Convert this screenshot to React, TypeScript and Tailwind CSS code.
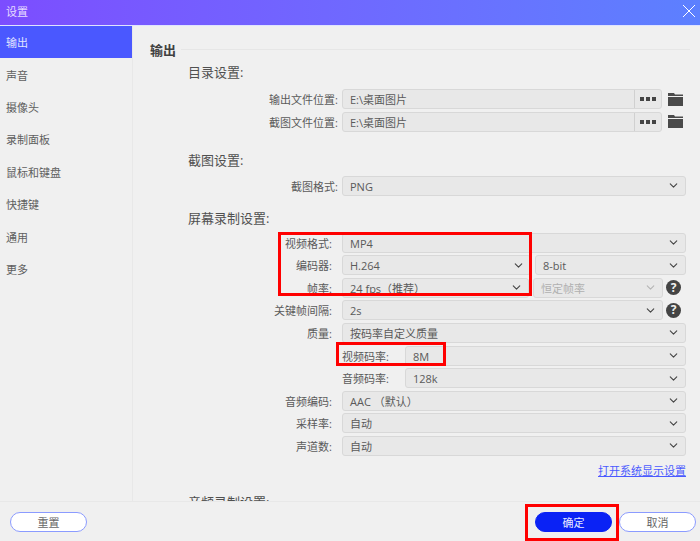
import { ChevronDown } from "lucide-react";
import type { ReactNode } from "react";

const navItems = ["输出", "声音", "摄像头", "录制面板", "鼠标和键盘", "快捷键", "通用", "更多"];

function Select({ value, className = "", disabled = false }: { value: string; className?: string; disabled?: boolean }) {
  return (
    <div
      className={`flex h-5 items-center justify-between rounded-[3px] border border-[#d8d8d8] bg-[#e8e8e8] pr-[5px] pl-[7px] ${
        disabled ? "text-[#b0b0b0]" : "text-[#5a5a5a]"
      } ${className}`}
    >
      <span className="pt-[2px]">{value}</span>
      <ChevronDown size={13} strokeWidth={2} className={disabled ? "text-[#b5b5b5]" : "text-[#444444]"} />
    </div>
  );
}

function Row({ label, wide = false, children }: { label: string; wide?: boolean; children: ReactNode }) {
  return (
    <div className="flex h-5 items-center pr-[14px]">
      <span className={`shrink-0 pt-[2px] text-right text-[#5a5a5a] ${wide ? "mr-[4px] w-[205px]" : "mr-[10px] w-[199px]"}`}>{label}</span>
      {children}
    </div>
  );
}

function SubRow({ label, value }: { label: string; value: string }) {
  return (
    <div className="flex h-5 items-center pr-[14px] pl-[209px]">
      <span className="w-[63px] shrink-0 pt-[2px] text-[#5a5a5a]">{label}</span>
      <Select value={value} className="flex-1" />
    </div>
  );
}

function Help() {
  return (
    <span className="mr-[5px] flex h-[15px] w-[15px] shrink-0 items-center justify-center rounded-full bg-[#444444] text-[12px] leading-none font-bold text-[#f0f0f0]">
      ?
    </span>
  );
}

function PathRow({ label }: { label: string }) {
  return (
    <Row label={label} wide>
      <div className="flex h-5 w-[320px] items-center rounded-[3px] border border-[#d8d8d8] bg-[#e8e8e8] text-[#5a5a5a]">
        <span className="flex-1 pt-[2px] pl-[7px]">E:\桌面图片</span>
        <span className="flex h-full w-[27px] items-center justify-center gap-[2px] border-l border-[#d0d0d0]">
          <i className="h-1 w-1 bg-[#444444]" />
          <i className="h-1 w-1 bg-[#444444]" />
          <i className="h-1 w-1 bg-[#444444]" />
        </span>
      </div>
      <svg width="15" height="13" viewBox="0 0 15 13" className="ml-[6px] shrink-0">
        <path d="M0 0h6l1 1.500h8V3H0z" fill="#4a4a4a" />
        <path d="M0 4h15v9H0z" fill="#4a4a4a" />
      </svg>
    </Row>
  );
}

function Heading({ children, className = "" }: { children: ReactNode; className?: string }) {
  return <div className={`h-4 pl-[55px] text-[13px] leading-4 text-[#505050] ${className}`}>{children}</div>;
}

function Pill({ children, primary = false }: { children: ReactNode; primary?: boolean }) {
  return (
    <button
      className={`flex h-5 w-[77px] items-center justify-center rounded-full border-[1.5px] pt-[2px] text-[11px] ${
        primary ? "border-[#0a22f5] bg-[#0a22f5] text-[#e8ebff]" : "border-[#8b9bff] bg-white text-[#666666]"
      }`}
    >
      {children}
    </button>
  );
}

export default function App() {
  return (
    <div
      className="relative flex h-[541px] w-[700px] flex-col overflow-hidden bg-[#f0f0f0] text-[11px] leading-4"
      style={{ fontFamily: '"Open Sans", "Noto Sans CJK SC", sans-serif' }}
    >
      {/* Title bar */}
      <div className="flex h-[26px] shrink-0 items-center justify-between border-b border-[#dfe3ff] bg-gradient-to-r from-[#7c4dff] to-[#5c80ff] pr-[5px] pb-[3px] pl-[6px] text-[#e6dcff]">
        <span className="pt-[2px]">设置</span>
        <svg width="12" height="12" viewBox="0 0 12 12" stroke="#ffffff" strokeWidth="1">
          <path d="M0 0l12 12M12 0L0 12" />
        </svg>
      </div>

      <div className="flex min-h-0 flex-1">
        {/* Sidebar */}
        <div className="w-[133px] shrink-0 border-r border-[#e8e8e8]">
          {navItems.map((item, i) => (
            <div
              key={item}
              className={`flex h-[32.400px] items-center pt-[2px] pl-[6px] ${
                i === 0 ? "bg-[#4a58ff] text-[#e0e4ff]" : "text-[#5f5f5f]"
              }`}
            >
              {item}
            </div>
          ))}
        </div>

        {/* Settings */}
        <div className="min-w-0 flex-1 overflow-hidden">
          <div className="mt-4 flex h-4 items-center pl-[17px]">
            <span className="text-[13px] font-bold text-[#404040]">输出</span>
            <div className="mt-[-2px] mr-[10px] ml-[5px] h-px flex-1 bg-[#e6e6e6]" />
          </div>

          <Heading className="mt-[6px]">目录设置:</Heading>
          <div className="mt-[9px] flex flex-col gap-[2.600px]">
            <PathRow label="输出文件位置:" />
            <PathRow label="截图文件位置:" />
          </div>

          <Heading className="mt-[20px]">截图设置:</Heading>
          <div className="mt-[8px]">
            <Row label="截图格式:" wide>
              <Select value="PNG" className="flex-1" />
            </Row>
          </div>

          <Heading className="mt-[14px]">屏幕录制设置:</Heading>
          <div className="mt-[7px] flex flex-col gap-[2.600px]">
            <Row label="视频格式:">
              <Select value="MP4" className="flex-1" />
            </Row>
            <Row label="编码器:">
              <div className="flex flex-1 gap-[4px]">
                <Select value="H.264" className="w-[189px]" />
                <Select value="8-bit" className="flex-1" />
              </div>
            </Row>
            <Row label="帧率:">
              <div className="flex flex-1 items-center">
                <Select value="24 fps（推荐）" className="w-[187px]" />
                <Select value="恒定帧率" className="mr-[3px] ml-[4px] flex-1" disabled />
                <Help />
              </div>
            </Row>
            <Row label="关键帧间隔:">
              <div className="flex flex-1 items-center gap-[3px]">
                <Select value="2s" className="flex-1" />
                <Help />
              </div>
            </Row>
            <Row label="质量:">
              <Select value="按码率自定义质量" className="flex-1" />
            </Row>
            <SubRow label="视频码率:" value="8M" />
            <SubRow label="音频码率:" value="128k" />
            <Row label="音频编码:">
              <Select value="AAC （默认）" className="flex-1" />
            </Row>
            <Row label="采样率:">
              <Select value="自动" className="flex-1" />
            </Row>
            <Row label="声道数:">
              <Select value="自动" className="flex-1" />
            </Row>
          </div>

          <div className="mt-[7px] h-4 pr-[14px] text-right text-[#4a5aff] underline">打开系统显示设置</div>
          <Heading className="mt-[15px]">音频录制设置:</Heading>
        </div>
      </div>

      {/* Footer */}
      <div className="flex h-10 shrink-0 items-center justify-between border-t border-[#e8e8e8] pr-1 pl-[10px]">
        <Pill>重置</Pill>
        <div className="flex gap-[7px]">
          <Pill primary>确定</Pill>
          <Pill>取消</Pill>
        </div>
      </div>

      {/* Red annotation boxes */}
      <div className="pointer-events-none absolute top-[232px] left-[278px] h-[64px] w-[254px] border-[3px] border-[#ff0000]" />
      <div className="pointer-events-none absolute top-[342px] left-[336px] h-[24px] w-[110px] border-[3px] border-[#ff0000]" />
      <div className="pointer-events-none absolute top-[504px] left-[525px] h-[37px] w-[94px] border-[3px] border-[#ff0000]" />
    </div>
  );
}
